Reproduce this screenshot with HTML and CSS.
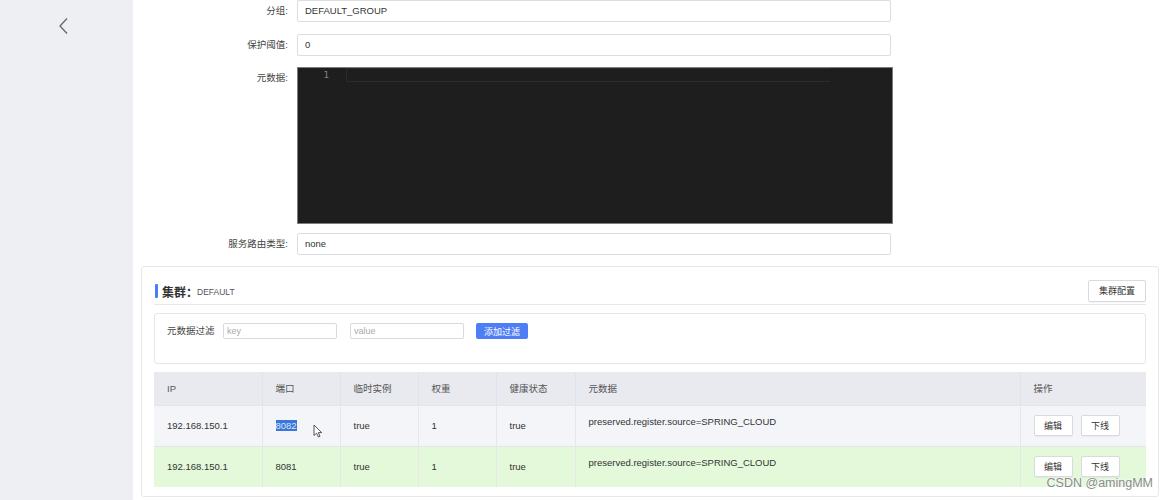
FILE: index.html
```html
<!DOCTYPE html>
<html lang="zh-CN">
<head>
<meta charset="utf-8">
<title>服务详情</title>
<link rel="stylesheet" href="styles.css">
</head>
<body>
<div class="page">
  <aside class="sidebar">
    <svg class="back" width="14" height="18" viewBox="0 0 14 18"><polyline points="10,1.5 3,9 10,16.5" fill="none" stroke="#666" stroke-width="1.3"/></svg>
  </aside>
  <main class="main">
    <section class="form">
      <div class="row">
        <label class="label">分组:</label>
        <div class="input">DEFAULT_GROUP</div>
      </div>
      <div class="row row-2">
        <label class="label">保护阈值:</label>
        <div class="input">0</div>
      </div>
      <div class="row row-3">
        <label class="label label-top">元数据:</label>
        <div class="editor">
          <div class="gutter">1</div>
          <div class="code"><div class="cur-line"></div></div>
        </div>
      </div>
      <div class="row row-4">
        <label class="label">服务路由类型:</label>
        <div class="input">none</div>
      </div>
    </section>

    <section class="card">
      <div class="card-head">
        <div class="title"><span class="bar"></span><span class="t-main">集群：</span><span class="t-sub">DEFAULT</span></div>
        <button class="btn">集群配置</button>
      </div>
      <div class="filter">
        <span class="f-label">元数据过滤</span>
        <div class="f-input">key</div>
        <div class="f-input">value</div>
        <button class="btn-primary">添加过滤</button>
      </div>
      <table class="table">
        <colgroup>
          <col style="width:108px"><col style="width:78px"><col style="width:78px"><col style="width:78px"><col style="width:79px"><col style="width:445px"><col style="width:126px">
        </colgroup>
        <thead>
          <tr><th>IP</th><th>端口</th><th>临时实例</th><th>权重</th><th>健康状态</th><th>元数据</th><th>操作</th></tr>
        </thead>
        <tbody>
          <tr class="r1">
            <td>192.168.150.1</td>
            <td class="port"><span class="sel">8082</span><svg class="cursor" width="10" height="14" viewBox="0 0 10 14"><path d="M1 1 L1 11.5 L3.6 9.2 L5.4 13 L7 12.3 L5.3 8.6 L8.7 8.6 Z" fill="#fff" stroke="#444" stroke-width="0.9" stroke-linejoin="round"/></svg></td>
            <td>true</td><td>1</td><td>true</td>
            <td class="meta">preserved.register.source=SPRING_CLOUD</td>
            <td class="ops"><button class="btn btn-s">编辑</button><button class="btn btn-s">下线</button></td>
          </tr>
          <tr class="r2">
            <td>192.168.150.1</td>
            <td>8081</td>
            <td>true</td><td>1</td><td>true</td>
            <td class="meta">preserved.register.source=SPRING_CLOUD</td>
            <td class="ops"><button class="btn btn-s">编辑</button><button class="btn btn-s">下线</button></td>
          </tr>
        </tbody>
      </table>
    </section>
  </main>
</div>
<div class="watermark">CSDN @amingMM</div>
</body>
</html>
```

FILE: styles.css
```css
* { box-sizing: border-box; }
html, body { margin: 0; padding: 0; }
body {
  width: 1167px;
  height: 500px;
  overflow: hidden;
  background: #fff;
  font-family: "Liberation Sans", "Noto Sans CJK SC", sans-serif;
  color: #333;
  position: relative;
}
.page { display: flex; height: 500px; }
.sidebar {
  width: 133px;
  flex: none;
  background: #eeeff3;
  display: flex;
  justify-content: center;
  padding-top: 17px;
}
.back { display: block; margin-left: -6px; }
.main { flex: 1; min-width: 0; }

.form { display: flex; flex-direction: column; }
.row { display: flex; align-items: center; }
.row-2 { margin-top: 12px; }
.row-3 { margin-top: 11px; align-items: flex-start; }
.row-4 { margin-top: 9px; }
.label {
  width: 164px;
  padding-right: 9px;
  text-align: right;
  font-size: 9.5px;
  color: #444;
  line-height: 22px;
  flex: none;
}
.label-top { line-height: 22px; }
.input {
  width: 594px;
  height: 22px;
  border: 1px solid #dcdde3;
  border-radius: 2px;
  padding-left: 7px;
  font-size: 9.5px;
  line-height: 20px;
  color: #333;
  background: #fff;
}
.editor {
  width: 596px;
  height: 157px;
  background: #1e1e1e;
  border: 1px solid #7d7d7d;
  display: flex;
}
.gutter {
  width: 48px;
  flex: none;
  text-align: right;
  padding-right: 17px;
  font-size: 9px;
  color: #858585;
  line-height: 13px;
  padding-top: 1px;
  font-family: "DejaVu Sans Mono", monospace;
}
.code { flex: 1; padding-top: 0; }
.cur-line {
  width: 484px;
  height: 14px;
  border: 1px solid #2b2b2b;
  border-right: none;
}

.card {
  margin: 11px 8px 0 8px;
  border: 1px solid #e8e8ec;
  border-radius: 3px;
  padding: 13px 12px 9px 12px;
  background: #fff;
}
.card-head {
  display: flex;
  justify-content: space-between;
  align-items: center;
  height: 25px;
  border-bottom: 1px solid #e8e8ec;
  padding-bottom: 3px;
}
.title { display: flex; align-items: center; padding-top: 1px; }
.bar { width: 3px; height: 14px; background: #4a7ef5; margin-left: 1px; margin-right: 4px; border-radius: 1px; }
.t-main { font-size: 12px; font-weight: 600; color: #333; }
.t-sub { font-size: 8.5px; color: #555; margin-left: -1px; padding-top: 2px; }
.btn {
  background: #fff;
  border: 1px solid #d9d9de;
  border-radius: 2px;
  font-family: inherit;
  font-size: 9px;
  color: #333;
  height: 22px;
  width: 58px;
  padding: 0;
  box-shadow: 0 1px 1px rgba(0,0,0,0.04);
}
.filter {
  margin-top: 8px;
  height: 51px;
  border: 1px solid #e6e6ea;
  border-radius: 3px;
  display: flex;
  align-items: flex-start;
  padding: 9px 0 0 12px;
}
.f-label { font-size: 9.5px; color: #444; line-height: 16px; width: 56px; flex: none; }
.f-input {
  width: 114px;
  height: 16px;
  border: 1px solid #d9d9de;
  border-radius: 2px;
  font-size: 9px;
  color: #aaa;
  line-height: 14px;
  padding-left: 3px;
  margin-right: 13px;
}
.btn-primary {
  margin-left: -1px;
  width: 52px;
  height: 16px;
  border: none;
  border-radius: 2px;
  background: #4e7ef5;
  color: #fff;
  font-family: inherit;
  font-size: 9px;
  padding: 0;
}
.table {
  margin-top: 8px;
  width: 992px;
  border-collapse: collapse;
  table-layout: fixed;
  font-size: 9.5px;
}
.table th {
  height: 33px;
  background: #e9eaef;
  font-weight: normal;
  color: #555;
  text-align: left;
  padding: 0 0 0 13px;
  border-left: 1px solid #e3e4e9;
}
.table th:first-child, .table td:first-child { border-left: none; }
.table td {
  height: 41px;
  padding: 0 0 0 13px;
  border-left: 1px solid #e6e7eb;
  border-top: 1px solid #e4e5e9;
  color: #333;
  vertical-align: middle;
}
.r1 td { background: #f4f5f8; }
.r2 td { background: #e3f9da; }
.table td.meta { vertical-align: top; padding-top: 10px; }
.port { position: relative; }
.sel { background: #3b77d8; color: #d9e6ff; }
.cursor { position: absolute; left: 50px; top: 18px; }
.ops { white-space: nowrap; }
.btn-s { width: 39px; height: 21px; margin-right: 8px; }
.watermark {
  position: absolute;
  right: 14px;
  bottom: 10px;
  font-size: 12.5px;
  color: #8a8a8a;
  text-shadow: 0 0 2px #fff, 0 0 2px #fff;
  font-family: "Liberation Sans", sans-serif;
}
```
